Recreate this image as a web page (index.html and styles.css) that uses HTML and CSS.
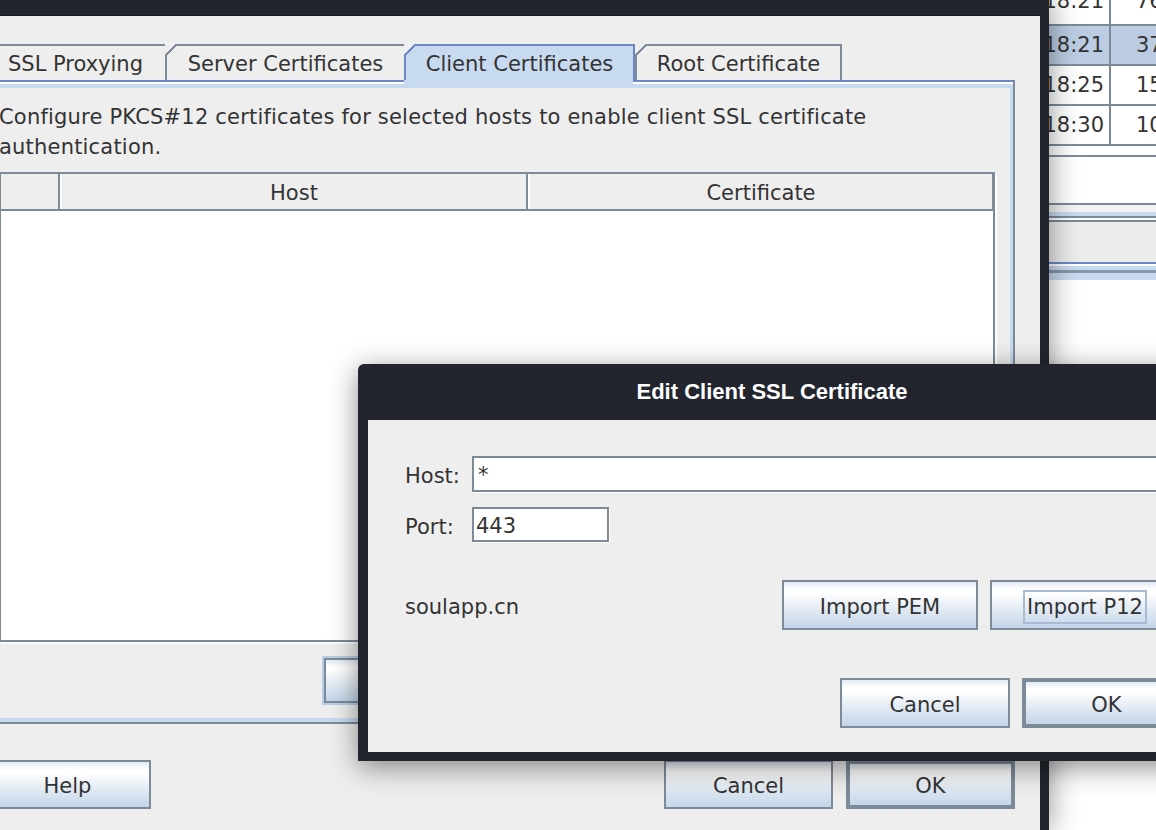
FILE: index.html
```html
<!DOCTYPE html>
<html lang="en">
<head>
<meta charset="utf-8">
<title>Edit Client SSL Certificate</title>
<link rel="stylesheet" href="styles.css">
</head>
<body>
<div class="desktop">
  <div class="main-win">
    <div class="titlebar"></div>
    <div class="main-body">
      <div class="tabs">
        <div class="tab tab-ssl">SSL Proxying</div>
        <div class="tab tab-server">Server Certificates</div>
        <div class="tab tab-client selected">Client Certificates</div>
        <div class="tab tab-root last">Root Certificate</div>
      </div>
      <div class="tab-panel">
        <div class="tab-inner">
          <p class="desc">Configure PKCS#12 certificates for selected hosts to enable client SSL certificate authentication.</p>
          <div class="scroll-pane">
            <div class="thead">
              <div class="th th-blank"></div>
              <div class="th th-host">Host</div>
              <div class="th th-cert">Certificate</div>
            </div>
            <div class="tbody"></div>
          </div>
          <div class="panel-buttons">
            <button class="btn focus">Add</button>
            <button class="btn">Remove</button>
          </div>
        </div>
      </div>
      <div class="dialog-buttons">
        <button class="btn help">Help</button>
        <button class="btn">Cancel</button>
        <button class="btn default">OK</button>
      </div>
    </div>
  </div>

  <div class="bg-app">
    <div class="row first"><div class="c-time">18:21</div><div class="c-num">76</div></div>
    <div class="row sel"><div class="c-time">18:21</div><div class="c-num">37</div></div>
    <div class="row"><div class="c-time">18:25</div><div class="c-num">15</div></div>
    <div class="row"><div class="c-time">18:30</div><div class="c-num">10</div></div>
    <div class="stripe s-white9"></div>
    <div class="stripe s-gray2"></div>
    <div class="stripe s-white46"></div>
    <div class="stripe s-gray2"></div>
    <div class="stripe s-light7"></div>
    <div class="stripe s-blue4"></div>
    <div class="stripe s-gray2"></div>
    <div class="stripe s-white2"></div>
    <div class="stripe s-gray2"></div>
    <div class="stripe s-panel40"></div>
    <div class="stripe s-dblue2"></div>
    <div class="stripe s-white2"></div>
    <div class="stripe s-blue4"></div>
    <div class="stripe s-mid3"></div>
    <div class="stripe s-blue7"></div>
    <div class="stripe s-rest"></div>
  </div>

  <div class="edit-dialog">
    <div class="ed-title">Edit Client SSL Certificate</div>
    <div class="ed-body">
      <div class="form">
        <label class="lbl">Host:</label>
        <div class="field">*</div>
        <label class="lbl">Port:</label>
        <div class="field port">443</div>
      </div>
      <div class="import-row">
        <span class="domain">soulapp.cn</span>
        <button class="btn imp">Import PEM</button>
        <button class="btn imp imp2"><span class="focus-text">Import P12</span></button>
      </div>
      <div class="action-row">
        <button class="btn">Cancel</button>
        <button class="btn default">OK</button>
      </div>
    </div>
  </div>
</div>
</body>
</html>
```

FILE: styles.css
```css
* { box-sizing: border-box; }

html, body {
  margin: 0;
  padding: 0;
}

body {
  width: 1156px;
  height: 830px;
  overflow: hidden;
  background: #fff;
  font-family: "DejaVu Sans", sans-serif;
  font-size: 21px;
  color: #333;
}

.desktop {
  position: relative;
  width: 1156px;
  height: 830px;
  display: flex;
  overflow: hidden;
}

/* ---------- main dialog ---------- */
.main-win {
  position: relative;
  z-index: 1;
  flex: none;
  width: 1074px;
  height: 830px;
  margin-left: -25px;
  border-left: 9px solid #22252d;
  border-right: 9px solid #22252d;
  background: #eee;
  box-shadow: 0 0 28px rgba(0, 0, 0, 0.45);
  display: flex;
  flex-direction: column;
}

.titlebar {
  flex: none;
  height: 16px;
  background: #22252d;
  border-bottom: 1px solid #16181d;
}

.main-body {
  padding: 28px 25px 0 0;
}

.tabs {
  display: flex;
  height: 36px;
}

.tab {
  position: relative;
  height: 36px;
  border-top: 2px solid #7d8b99;
  border-left: 2px solid #7d8b99;
  text-align: center;
  line-height: 36px;
  white-space: nowrap;
}

.tab::before {
  content: "";
  position: absolute;
  top: -2px;
  left: -2px;
  width: 12px;
  height: 12px;
  background: linear-gradient(to bottom right,
    #eee 0, #eee calc(50% - 1px),
    #7d8b99 calc(50% - 1px), #7d8b99 calc(50% + 1px),
    transparent calc(50% + 1px));
}

.tab-ssl { width: 181px; }
.tab-server { width: 239px; }
.tab-client { width: 231px; }
.tab-root { width: 207px; }

.tab.last { border-right: 2px solid #7d8b99; }

.tab.selected {
  z-index: 2;
  background: #c8daf0;
  border-top-color: #6a89c4;
  border-left-color: #6a89c4;
  border-right: 2px solid #6a89c4;
}

.tab.selected::before {
  background: linear-gradient(to bottom right,
    #eee 0, #eee calc(50% - 1px),
    #6a89c4 calc(50% - 1px), #6a89c4 calc(50% + 1px),
    transparent calc(50% + 1px));
}

.tab.selected::after {
  content: "";
  position: absolute;
  left: -2px;
  right: 0;
  bottom: -8px;
  height: 8px;
  background: #c8daf0;
}

.tab-panel {
  border: 2px solid #7d8b99;
  border-top-color: #6a89c4;
  background: #eee;
  box-shadow: inset 0 2px 0 #fff;
  padding-top: 2px;
}

.tab-inner {
  border: 4px solid #c8daf0;
  border-right-width: 3px;
  padding: 14px 15px 15px 9px;
}

.desc {
  margin: 0;
  line-height: 30px;
  letter-spacing: 0.2px;
}

.scroll-pane {
  margin-top: 10px;
  height: 470px;
  border: 2px solid #7d8b99;
  box-shadow: 2px 2px 0 #fff;
  background: #fff;
  display: flex;
  flex-direction: column;
}

.thead {
  flex: none;
  display: flex;
  height: 37px;
  background: #eee;
  border-bottom: 2px solid #7d8b99;
}

.th {
  padding-top: 3px;
  line-height: 32px;
  text-align: center;
  border-left: 2px solid #fff;
  border-right: 2px solid #7d8b99;
}

.th-blank { flex: none; width: 59px; border-left: none; }
.th-host { flex: none; width: 468px; }
.th-cert { flex: 1; border-right: 1px solid #7d8b99; }

.tbody { flex: 1; background: #fff; }

.panel-buttons {
  margin-top: 16px;
  padding-left: 6px;
  display: flex;
  justify-content: center;
  gap: 12px;
}

.panel-buttons .btn {
  width: 170px;
  height: 45px;
}

.btn.focus { outline: 2px solid #b8cde6; }

.dialog-buttons {
  display: flex;
  gap: 13px;
  margin-top: 36px;
}

.dialog-buttons .btn {
  width: 169px;
  height: 49px;
}

.dialog-buttons .btn.help {
  width: 167px;
  margin-right: auto;
}

/* ---------- buttons ---------- */
.btn {
  display: flex;
  align-items: center;
  justify-content: center;
  padding: 3px 0 0 0;
  font-family: "DejaVu Sans", sans-serif;
  font-size: 21px;
  color: #333;
  border: 2px solid #7d8b99;
  background: linear-gradient(to bottom,
    #e2ebf5 0%, #ffffff 16%, #ffffff 24%, #e6edf5 55%, #c4d5e9 100%);
}

.btn.default { border-width: 4px; }

/* ---------- background app strip ---------- */
.bg-app {
  flex: 1;
  min-width: 0;
  background: #fff;
  display: flex;
  flex-direction: column;
  overflow: hidden;
}

.row {
  flex: none;
  display: flex;
  height: 40px;
  border-bottom: 2px solid #7d8b99;
  line-height: 38px;
  white-space: nowrap;
}

.row.first { margin-top: -14px; line-height: 30px; }
.row.sel { background: #bccde3; }

.c-time {
  flex: none;
  width: 62px;
  padding-right: 5px;
  text-align: right;
  border-right: 2px solid #7d8b99;
  overflow: hidden;
  direction: rtl;
}

.c-num { padding-left: 25px; }

.stripe { flex: none; }
.s-white9 { height: 9px; background: #fff; }
.s-gray2 { height: 2px; background: #7d8b99; }
.s-white46 { height: 46px; background: #fff; }
.s-light7 { height: 7px; background: #f4f4f4; }
.s-blue4 { height: 4px; background: #c8daf0; }
.s-white2 { height: 2px; background: #fff; }
.s-panel40 { height: 40px; background: #ececec; }
.s-dblue2 { height: 2px; background: #6a89c4; }
.s-mid3 { height: 3px; background: #8797ab; }
.s-blue7 { height: 7px; background: #c8daf0; }
.s-rest { flex: 1; background: #fff; }

/* ---------- edit dialog ---------- */
.edit-dialog {
  position: absolute;
  z-index: 5;
  left: 358px;
  top: 364px;
  width: 880px;
  height: 397px;
  background: #22252d;
  border-radius: 6px 6px 0 0;
  padding: 0 10px 9px 10px;
  display: flex;
  flex-direction: column;
  box-shadow: 0 6px 28px rgba(0, 0, 0, 0.45);
}

.ed-title {
  flex: none;
  height: 56px;
  display: flex;
  align-items: center;
  justify-content: center;
  padding-right: 52px;
  color: #fff;
  font-family: "Liberation Sans", sans-serif;
  font-weight: bold;
  font-size: 22px;
}

.ed-body {
  flex: 1;
  background: #eee;
  padding: 36px 37px 24px 37px;
}

.form {
  display: grid;
  grid-template-columns: 55px 1fr;
  column-gap: 12px;
  row-gap: 15px;
  align-items: center;
}

.lbl {
  white-space: nowrap;
  padding-top: 4px;
}

.field {
  height: 36px;
  background: #fff;
  border: 2px solid #7d8b99;
  box-shadow: 1px 1px 0 #fff;
  padding: 3px 0 0 4px;
  line-height: 29px;
}

.field.port {
  width: 137px;
  height: 35px;
  padding-left: 2px;
  line-height: 28px;
}

.import-row {
  display: flex;
  align-items: center;
  gap: 12px;
  margin-top: 38px;
  margin-right: 11px;
}

.domain {
  margin-right: auto;
  padding-top: 3px;
}

.btn.imp { width: 196px; height: 50px; }
.btn.imp2 { width: 190px; }

.focus-text {
  display: inline-block;
  padding: 0 2px;
  line-height: 30px;
  outline: 2px solid #a8bbd1;
}

.action-row {
  display: flex;
  justify-content: flex-end;
  gap: 12px;
  margin-top: 48px;
}

.action-row .btn { width: 170px; height: 50px; }
.action-row .btn.default { width: 169px; }
```
